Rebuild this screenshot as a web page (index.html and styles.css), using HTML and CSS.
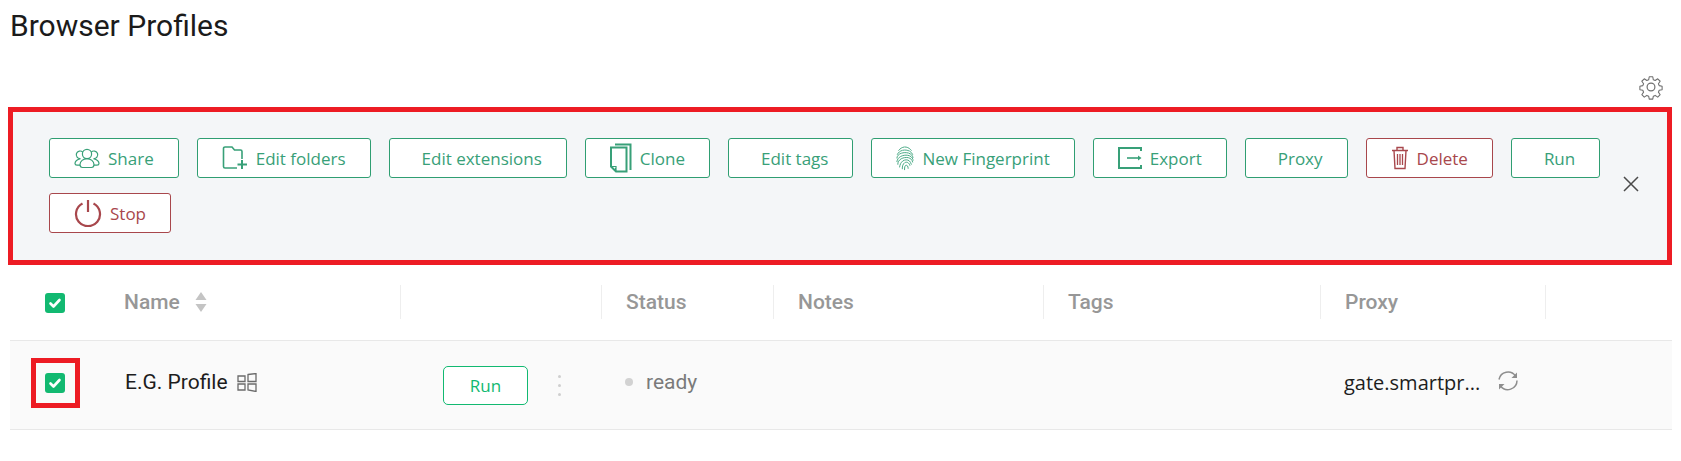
FILE: index.html
```html
<!DOCTYPE html>
<html lang="en">
<head>
<meta charset="utf-8">
<title>Browser Profiles</title>
<link rel="stylesheet" href="styles.css">
</head>
<body>
<h1 class="title">Browser Profiles</h1>
<div class="settings-row">
  <svg class="gear" viewBox="0 0 24 24" fill="none" stroke="#6f6f6f" stroke-width="1.1" stroke-linejoin="round"><circle cx="12" cy="12" r="3.6"/><path d="M10.2 1.5h3.6l.6 3.1 1.9.8 2.6-1.8 2.5 2.5-1.8 2.6.8 1.9 3 .6v3.6l-3 .6-.8 1.9 1.8 2.6-2.5 2.5-2.6-1.8-1.9.8-.6 3h-3.6l-.6-3-1.9-.8-2.6 1.8-2.5-2.5 1.8-2.6-.8-1.9-3-.6v-3.6l3-.6.8-1.9-1.8-2.6 2.5-2.5 2.6 1.8 1.9-.8z" transform="translate(1.2 1.2) scale(.9)"/></svg>
</div>
<section class="toolbar">
  <div class="actions">
    <button class="btn">
      <svg class="ico i-share" viewBox="0 0 26 22" fill="none" stroke="currentColor" stroke-width="1.2"><circle cx="13" cy="7" r="4.6"/><path d="M8.8 5.2A3.8 3.8 0 1 0 6.5 11.6C3.5 12.4 1 14.5 1 16.5c0 1 1 1.600 2 1.600h3M17.200 5.200a3.800 3.800 0 1 1 2.300 6.400c3 .8 5.500 2.900 5.500 4.900 0 1-1 1.600-2 1.600h-3"/><path d="M13 11.600c-3.800 0-7 2.800-7 6 0 1.700 1 2.900 2.500 2.900h9c1.500 0 2.500-1.200 2.500-2.900 0-3.200-3.200-6-7-6z"/></svg>
      Share
    </button>
    <button class="btn">
      <svg class="ico i-folder" viewBox="0 0 26 24" fill="none" stroke="currentColor" stroke-width="1.600"><path d="M15 22H3a1.500 1.500 0 0 1-1.500-1.500v-18A1.500 1.500 0 0 1 3 1h7l2.500 3h6A1.500 1.500 0 0 1 20 5.500V13"/><path d="M20 14v9M15.500 18.500h9.500" stroke-width="2"/></svg>
      Edit folders
    </button>
    <button class="btn"><span class="slot"></span>Edit extensions</button>
    <button class="btn">
      <svg class="ico i-clone" viewBox="0 0 22 30" fill="none" stroke="currentColor" stroke-width="2"><path d="M5 1.500h15.500V27"/><path d="M6 26h-1"/><path d="M1 4.500h15.500V28.500H6L1 23.500z"/><path d="M1 23.500h5v5" stroke-width="1.200"/></svg>
      Clone
    </button>
    <button class="btn"><span class="slot"></span>Edit tags</button>
    <button class="btn">
      <svg class="ico i-finger" viewBox="0 0 20 28" fill="none" stroke="currentColor" stroke-width="1" stroke-linecap="round"><path d="M3 5.500C7 .5 13 .5 17 5.500M1.500 10C4.500 3.500 15.500 3.500 18.500 10M1 14c.5-7.500 17-8.500 18 0M1 18c1-8.500 17-10 18-1.500M2 21c-.5-8 15-11 16.500-2.500M4 24c1-9 11-11 13-3M7 26c-.5-8 7-10 8.500-3.500M9.500 27c-.5-7 4-6 4-1.500" stroke-dasharray="7 1"/></svg>
      New Fingerprint
    </button>
    <button class="btn">
      <svg class="ico i-export" viewBox="0 0 24 22" fill="none" stroke="currentColor" stroke-width="2"><path d="M23 4V1H1v20h22v-3"/><path d="M9 11h12" stroke-width="1.600"/><path d="M20 8.500l3.500 2.500-3.500 2.500z" fill="currentColor" stroke="none"/></svg>
      Export
    </button>
    <button class="btn"><span class="slot"></span>Proxy</button>
    <button class="btn danger">
      <svg class="ico i-trash" viewBox="0 0 18 24" fill="none" stroke="currentColor" stroke-width="1.400"><path d="M1 4.500h16M6 4.500V1.500h6v3M3 4.500l1 18h10l1-18"/><path d="M6.500 8v11M9 8v11M11.500 8v11" stroke-width="1.300"/></svg>
      Delete
    </button>
    <button class="btn"><span class="slot"></span>Run</button>
    <button class="btn danger">
      <svg class="ico i-power" viewBox="0 0 28 28" fill="none" stroke="currentColor" stroke-width="2.200"><path d="M8.500 4.500a12 12 0 1 0 11 0"/><path d="M14 1v12"/></svg>
      Stop
    </button>
  </div>
  <svg class="close" viewBox="0 0 16 16" fill="none" stroke="#4a4a4a" stroke-width="1.500"><path d="M1 1l14 14M15 1L1 15"/></svg>
</section>

<div class="table">
  <div class="thead">
    <div class="cell check-cell"><span class="checkbox"><svg viewBox="0 0 20 20" fill="none" stroke="#fff" stroke-width="2.600" stroke-linecap="round" stroke-linejoin="round"><path d="M5.500 10.500l3 3 6-6.500"/></svg></span></div>
    <div class="cell th">Name
      <svg class="sort" viewBox="0 0 12 20" fill="#c4c4c4"><path d="M6 0l5.500 8H.5zM6 20L.5 12h11z"/></svg>
    </div>
    <div class="cell th sep"></div>
    <div class="cell th sep">Status</div>
    <div class="cell th sep">Notes</div>
    <div class="cell th sep">Tags</div>
    <div class="cell th sep">Proxy</div>
    <div class="cell th sep"></div>
  </div>
  <div class="row">
    <div class="cell check-cell"><span class="mark"><span class="checkbox"><svg viewBox="0 0 20 20" fill="none" stroke="#fff" stroke-width="2.600" stroke-linecap="round" stroke-linejoin="round"><path d="M5.500 10.500l3 3 6-6.500"/></svg></span></span></div>
    <div class="cell name">E.G. Profile
      <svg class="win" viewBox="0 0 20 19" fill="none" stroke="#6b6b6b" stroke-width="1.300"><path d="M1 3h7v5.500H1zM11 1.500l8-1v8h-8zM1 11h7v6H1zM11 11h8v7.500l-8-1.500z"/></svg>
    </div>
    <div class="cell run-cell">
      <button class="run">Run</button>
      <span class="dots"><i></i><i></i><i></i></span>
    </div>
    <div class="cell status"><i class="dot"></i>ready</div>
    <div class="cell"></div>
    <div class="cell"></div>
    <div class="cell proxy">gate.smartpr...
      <svg class="sync" viewBox="0 0 22 22" fill="none" stroke="#8e8e8e" stroke-width="1.500"><path d="M2 9.500A9.200 9.200 0 0 1 18.500 6"/><path d="M20 10.500a9.200 9.200 0 0 1-16.500 5.500"/><path d="M20 2.500v5.500h-5.500z" fill="#8e8e8e" stroke="none"/><path d="M2 19.500V14h5.500z" fill="#8e8e8e" stroke="none"/></svg>
    </div>
    <div class="cell"></div>
  </div>
</div>
</body>
</html>
```
FILE: styles.css
```css
* { box-sizing: border-box; }
html, body { margin: 0; padding: 0; background: #fff; }
body { width: 1681px; height: 461px; overflow: hidden; font-family: Roboto, sans-serif; }

.title { margin: 0; padding: 9px 0 0 10px; height: 52px; font-size: 30px; line-height: 34px; font-weight: 400; color: #1b1b1b; }

.settings-row { display: flex; justify-content: flex-end; height: 55px; padding: 22px 17px 0 0; }
.gear { width: 26px; height: 26px; }

.toolbar { display: flex; align-items: center; margin-left: 8px; width: 1664px; height: 158px; border: 5px solid #ed1c24; background: #f4f6f8; padding: 25px 28px 26px 36px; }
.actions { flex: 1; display: flex; flex-wrap: wrap; gap: 15px 18px; align-content: flex-start; }
.close { width: 16px; height: 16px; margin-bottom: 3px; }

.btn { display: inline-flex; align-items: center; gap: 8px; height: 40px; padding: 0 24px; background: #fff; border: 1px solid #2f9e72; border-radius: 3px; color: #38a078; font-family: "Open Sans", sans-serif; font-size: 17px; white-space: nowrap; }
.btn.danger { border-color: #a8474c; color: #a8474c; }
.slot { width: 0; }
.ico { flex: none; }
.i-share { width: 26px; height: 22px; }
.i-folder { width: 26px; height: 24px; }
.i-clone { width: 22px; height: 30px; }
.i-finger { width: 18px; height: 26px; }
.i-export { width: 24px; height: 22px; }
.i-trash { width: 18px; height: 24px; }
.i-power { width: 28px; height: 28px; }

.table { margin-left: 10px; width: 1662px; }
.thead, .row { display: grid; grid-template-columns: 90px 300px 201px 172px 270px 277px 225px 127px; align-items: center; }
.thead { height: 75px; }
.row { height: 90px; background: #fafafa; border-top: 1px solid #e8e8e8; border-bottom: 1px solid #e8e8e8; }
.cell { display: flex; align-items: center; min-width: 0; }
.th { height: 34px; margin-top: -2px; padding-left: 24px; font-size: 21px; font-weight: 500; color: #979797; }
.th.sep { border-left: 1px solid #eeeeee; }
.check-cell { justify-content: center; margin-left: -10px; width: 110px; margin-right: -20px; }
.row > .check-cell { margin-top: -4px; }
.checkbox { display: flex; width: 20px; height: 20px; border-radius: 3px; background: #12b971; }
.checkbox svg { width: 20px; height: 20px; }
.mark { display: flex; align-items: center; justify-content: center; width: 49px; height: 50px; border: 5px solid #ed1c24; }

.sort { width: 12px; height: 20px; margin-left: 15px; }
.name { padding-left: 25px; font-size: 21px; color: #1d1d1d; margin-top: -6px; }
.win { width: 20px; height: 19px; margin-left: 9px; }
.run-cell { padding-left: 43px; }
.run { width: 85px; height: 39px; background: #fff; border: 1px solid #12b971; border-radius: 5px; color: #12b971; font-family: "Open Sans", sans-serif; font-size: 17px; }
.dots { display: flex; flex-direction: column; gap: 6px; margin-left: 30px; }
.dots i { width: 3px; height: 3px; border-radius: 50%; background: #cfcfcf; }
.status { padding-left: 24px; font-size: 21px; color: #7a7a7a; margin-top: -6px; }
.dot { width: 8px; height: 8px; margin-right: 13px; border-radius: 50%; background: #d2d2d2; }
.proxy { padding-left: 24px; font-family: "Open Sans", sans-serif; font-size: 20px; color: #1d1d1d; white-space: nowrap; margin-top: -6px; }
.sync { width: 22px; height: 22px; margin-left: 17px; margin-top: -2px; }
```
